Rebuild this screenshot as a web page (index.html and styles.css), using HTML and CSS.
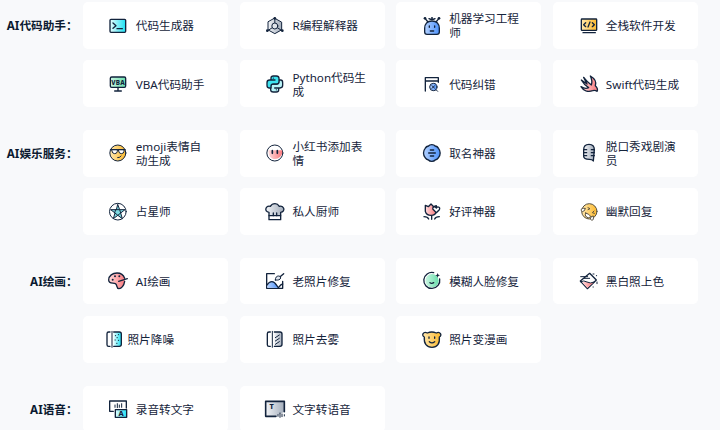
FILE: index.html
```html
<!DOCTYPE html>
<html lang="zh-CN">
<head>
    <meta charset="UTF-8">
    <meta name="viewport" content="width=device-width, initial-scale=1.0">
    <title>AI工具</title>
    <link rel="stylesheet" href="styles.css">
</head>
<body>
    <svg class="defs" width="0" height="0">
        <defs>
            <linearGradient id="cyan"><stop offset="0.1" stop-color="#d3fbfd"/><stop offset="1" stop-color="#1be0f2"/></linearGradient>
            <linearGradient id="green"><stop offset="0" stop-color="#c9f5e1"/><stop offset="1" stop-color="#6bdfad"/></linearGradient>
            <linearGradient id="gray"><stop offset="0" stop-color="#f2f4f7"/><stop offset="1" stop-color="#a3adbb"/></linearGradient>
            <linearGradient id="blue"><stop offset="0" stop-color="#b5d2ff"/><stop offset="1" stop-color="#4c92fc"/></linearGradient>
            <linearGradient id="yellow"><stop offset="0" stop-color="#ffe7ae"/><stop offset="1" stop-color="#fdb92b"/></linearGradient>
            <linearGradient id="red"><stop offset="0" stop-color="#ffdcdd"/><stop offset="1" stop-color="#fb7a7e"/></linearGradient>
        </defs>
    </svg>

    <div class="tools">
        <section class="group">
            <h3 class="label">AI代码助手：</h3>
            <div class="list">
                <a class="card">
                    <svg class="icon" viewBox="0 0 60 60">
                        <rect x="6" y="10" width="47" height="39" rx="3" fill="url(#cyan)"/>
                        <path d="M15 21l9 8-9 8M27 38h16"/>
                    </svg>
                    <span>代码生成器</span>
                </a>
                <a class="card">
                    <svg class="icon thin" viewBox="0 0 60 60">
                        <path fill="url(#gray)" d="M29.500 7L50 18.500v23L29.500 53 9 41.500v-23z"/>
                        <path d="M29.500 7v15M22 35L8 44M37 35l14 9"/>
                        <circle cx="29.500" cy="30" r="9" fill="#dfe4ea"/>
                        <g class="dark"><circle cx="29.500" cy="7" r="4"/><circle cx="7" cy="44" r="4"/><circle cx="52" cy="44" r="4"/></g>
                    </svg>
                    <span>R编程解释器</span>
                </a>
                <a class="card">
                    <svg class="icon" viewBox="0 0 60 60">
                        <path d="M9 7l9 11M51 7l-9 11M21 8q9 5 18 0"/>
                        <path fill="url(#blue)" d="M8 48V37C8 24 16 15 30 15s22 9 22 22v11q0 7-7 7H15q-7 0-7-7z"/>
                        <path d="M22 30v4M38 30v4M25 45h10"/>
                        <g class="dark"><circle cx="9" cy="7" r="4"/><circle cx="51" cy="7" r="4"/><circle cx="30" cy="6" r="3"/></g>
                    </svg>
                    <span>机器学习工程师</span>
                </a>
                <a class="card">
                    <svg class="icon" viewBox="0 0 60 60">
                        <rect x="7" y="9" width="46" height="34" rx="2" fill="url(#yellow)"/>
                        <path d="M20 20l-6 6 6 6M40 20l6 6-6 6M33 18l-6 15M12 50h37"/>
                    </svg>
                    <span>全栈软件开发</span>
                </a>
                <a class="card">
                    <svg class="icon" viewBox="0 0 60 60">
                        <rect x="7" y="9" width="46" height="31" rx="4" fill="url(#green)"/>
                        <path d="M30 40v9M20 51h20"/>
                        <text x="30" y="32" font-size="19" textLength="40">VBA</text>
                    </svg>
                    <span>VBA代码助手</span>
                </a>
                <a class="card">
                    <svg class="icon" viewBox="0 0 60 60">
                        <path fill="#b8f3f7" d="M41 42v6q0 6-7 6h-9q-8 0-8-7V37q0-7 7-7h10q7 0 7-6v-6h6q6 0 6 8v8q0 8-8 8H29"/>
                        <path fill="#3ee3ef" d="M18 18v-6q0-6 7-6h9q8 0 8 7v10q0 7-7 7H25q-7 0-7 6v6h-6q-6 0-6-8v-8q0-8 8-8h16"/>
                        <path class="thin" d="M25 12v1M34 47v1"/>
                    </svg>
                    <span>Python代码生成</span>
                </a>
                <a class="card">
                    <svg class="icon" viewBox="0 0 60 60">
                        <path d="M10 51V11h39v14M10 21h39"/>
                        <circle class="thin" cx="34" cy="39" r="11" fill="url(#blue)"/>
                        <path class="thin" d="M42 47l5 5M30 35l8 8M38 35l-8 8"/>
                    </svg>
                    <span>代码纠错</span>
                </a>
                <a class="card">
                    <svg class="icon" viewBox="0 0 60 60">
                        <path fill="url(#red)" d="M34 6c14 8 18 20 15 29 5 5 8 12 5 17-5-4-8-4-13-2-14 5-28 0-35-12 8 5 17 6 23 3C18 34 12 27 7 18l17 12L14 10c7 9 14 17 23 23 3-9 1-19-3-27z"/>
                    </svg>
                    <span>Swift代码生成</span>
                </a>
            </div>
        </section>

        <section class="group">
            <h3 class="label">AI娱乐服务：</h3>
            <div class="list">
                <a class="card">
                    <svg class="icon thin" viewBox="0 0 60 60">
                        <circle cx="29.500" cy="30" r="24" fill="url(#yellow)"/>
                        <path fill="#fff" d="M12 20h16v5q-1 7-8 7t-8-7zM32 20h16v5q-1 7-8 7t-8-7z"/>
                        <path d="M7 20h45M29 44q7 1 10-5"/>
                    </svg>
                    <span>emoji表情自动生成</span>
                </a>
                <a class="card">
                    <svg class="icon thin" viewBox="0 0 60 60">
                        <circle cx="29.500" cy="30" r="24" fill="#fff"/>
                        <path class="plain" fill="url(#red)" d="M10 22h41q3 12-6 20t-22 5Q10 43 10 22z"/>
                        <path class="mark" d="M22 23v8M37 23v8"/>
                    </svg>
                    <span>小红书添加表情</span>
                </a>
                <a class="card">
                    <svg class="icon" viewBox="0 0 60 60">
                        <path fill="url(#blue)" d="M29.500 5q7 0 10 4 7 1 10 7 5 6 5 14t-5 14q-3 6-10 7-3 4-10 4t-10-4q-7-1-10-7-5-6-5-14t5-14q3-6 10-7 3-4 10-4z"/>
                        <path d="M25 21h10M20 30h20M25 39h10"/>
                    </svg>
                    <span>取名神器</span>
                </a>
                <a class="card">
                    <svg class="icon" viewBox="0 0 60 60">
                        <path fill="url(#gray)" d="M14 40V20C14 9 20 4 30 4s16 6 16 16l-3 34c-3-5-7-5-12-5-11 0-17-3-17-9z"/>
                        <path d="M14 20h9M14 29h9M14 38h9M46 20H37M46 29H37M46 38H37"/>
                    </svg>
                    <span>脱口秀戏剧演员</span>
                </a>
                <a class="card">
                    <svg class="icon thin" viewBox="0 0 60 60">
                        <circle cx="29.500" cy="29" r="25" fill="#fff"/>
                        <path fill="#7fdbe2" d="M29.500 8l5.500 15h16L38 33l5 17-13.500-10L16 50l5-17L8 23h16z"/>
                        <path d="M24 23h11l3 10-8.500 7L21 33z"/>
                    </svg>
                    <span>占星师</span>
                </a>
                <a class="card">
                    <svg class="icon" viewBox="0 0 60 60">
                        <path fill="url(#gray)" d="M12 41V31C4 30 1 25 3 19s8-8 13-6c3-5 8-8 14-8s10 3 13 8c6-2 11 1 13 6s-1 11-9 12v10z"/>
                        <path fill="#fff" d="M12 41h35v12H12z"/>
                        <path d="M25 41v-8M35 41v-8"/>
                    </svg>
                    <span>私人厨师</span>
                </a>
                <a class="card">
                    <svg class="icon" viewBox="0 0 60 60">
                        <path fill="url(#red)" d="M10 10l9 4 8-8 8 8 8-3v17q-2 12-16 12T10 28z"/>
                        <path fill="#fff" d="M43 32L33 22c-3-5 4-11 10-4 5-7 13-1 9 5z"/>
                        <path d="M29 41v11M6 44q11 0 14 7M52 44q-11 0-14 7"/>
                    </svg>
                    <span>好评神器</span>
                </a>
                <a class="card">
                    <svg class="icon thin gold" viewBox="0 0 60 60">
                        <circle cx="31" cy="28" r="23" fill="url(#yellow)"/>
                        <path fill="#fff" d="M20 33q10 2 16 11-9 7-15 0-4-5-1-11z"/>
                        <path fill="#fff" d="M18 19q-12-1-12 6 3 7 9 2zM43 43q2 12-5 12-7-3-2-10z"/>
                        <path d="M27 17l6 3-6 3M45 27l-5 5 6 2"/>
                    </svg>
                    <span>幽默回复</span>
                </a>
            </div>
        </section>

        <section class="group">
            <h3 class="label">AI绘画：</h3>
            <div class="list">
                <a class="card">
                    <svg class="icon" viewBox="0 0 60 60">
                        <path fill="url(#red)" d="M50 31c-2 13-10 22-17 22-9 0-4-12-11-15C15 35 2 39 2 27 2 14 14 6 27 6c13 0 20 7 23 16"/>
                        <path d="M32 31l26-8"/>
                        <g class="dark"><circle cx="14" cy="26" r="3"/><circle cx="21" cy="16" r="3"/><circle cx="34" cy="16" r="3"/></g>
                    </svg>
                    <span>AI绘画</span>
                </a>
                <a class="card">
                    <svg class="icon" viewBox="0 0 60 60">
                        <path d="M28 8H5v44h48V31"/>
                        <path class="plain" fill="url(#blue)" d="M7 43q14-24 29 0l5 7H7z"/>
                        <path d="M5 43q16-22 30 0l6 8M43 47q4-7 10-8"/>
                        <path class="thin" fill="#dfe5ee" d="M31 27q0-12 10-12 7 0 6 6-2 8-16 6z"/>
                        <path d="M47 16l9-8"/>
                    </svg>
                    <span>老照片修复</span>
                </a>
                <a class="card">
                    <svg class="icon" viewBox="0 0 60 60">
                        <circle class="plain" cx="30" cy="29" r="20" fill="url(#green)"/>
                        <path d="M35 5A24 24 0 1 0 53 24M24 35q5 4 11 0"/>
                        <path class="dark" d="M47 6l2 5 5 2-5 2-2 5-2-5-5-2 5-2z"/>
                    </svg>
                    <span>模糊人脸修复</span>
                </a>
                <a class="card">
                    <svg class="icon" viewBox="0 0 60 60">
                        <path fill="#fff" d="M32 7l20 20-27 26L4 30z"/>
                        <path class="plain" fill="url(#red)" d="M9 34q8-4 16 0t18 1L25 51z"/>
                        <path class="thin" d="M5 32q10-5 19 1t22 0M5 17h21M16 22h16M42 9h3M52 14h1M54 33v5M42 48h1"/>
                    </svg>
                    <span>黑白照上色</span>
                </a>
                <a class="card tight">
                    <svg class="icon" viewBox="0 0 60 60">
                        <path d="M18 9h-4q-5 0-5 5v33q0 5 5 5h4"/>
                        <path class="thin" d="M24 7v48"/>
                        <path fill="url(#cyan)" d="M29 9h17q6 0 6 6v31q0 6-6 6H29"/>
                        <path class="thin" d="M34 20h1M43 17h1M39 26h1M33 33h1M43 34h1M38 43h1"/>
                    </svg>
                    <span>照片降噪</span>
                </a>
                <a class="card">
                    <svg class="icon" viewBox="0 0 60 60">
                        <path d="M16 9h-4q-5 0-5 5v33q0 5 5 5h4"/>
                        <path class="thin" d="M22 7v48"/>
                        <path fill="url(#gray)" d="M28 9h17q6 0 6 6v31q0 6-6 6H28"/>
                        <path class="thin" d="M31 26l12-8M31 36l12-8M31 46l12-8"/>
                    </svg>
                    <span>照片去雾</span>
                </a>
                <a class="card">
                    <svg class="icon" viewBox="0 0 60 60">
                        <path fill="url(#yellow)" d="M7 24C-3 19 4 6 16 12q13-6 27 0c11-6 19 7 9 12 2 20-6 31-22 31S5 44 7 24z"/>
                        <path d="M21 24v4M38 24v4M22 38q8 7 16 0"/>
                    </svg>
                    <span>照片变漫画</span>
                </a>
            </div>
        </section>

        <section class="group">
            <h3 class="label">AI语音：</h3>
            <div class="list">
                <a class="card">
                    <svg class="icon" viewBox="0 0 60 60">
                        <path d="M16 37H5V6h50v21"/>
                        <path class="thin" d="M21 18v7M28 14v12M34 18v7M41 14v11"/>
                        <rect x="22" y="32" width="34" height="23" fill="url(#cyan)"/>
                        <text x="39" y="52" font-size="22">A</text>
                    </svg>
                    <span>录音转文字</span>
                </a>
                <a class="card">
                    <svg class="icon bold" viewBox="0 0 60 60">
                        <path fill="url(#gray)" d="M33 52H2V7h56v31"/>
                        <path class="thin" d="M39 47v5M45 42v13M51 45v8M58 47v4"/>
                        <text x="20" y="31" font-size="22">T</text>
                    </svg>
                    <span>文字转语音</span>
                </a>
            </div>
        </section>
    </div>
</body>
</html>
```
FILE: styles.css
```css
body {
    margin: 0;
    background: #f8f9fb;
    color: #15243b;
    font-family: 'Noto Sans', 'Noto Sans CJK SC', sans-serif;
    font-size: 11.65px;
    line-height: 14px;
    height: 430px;
    overflow: hidden;
}

.defs {
    display: block;
}

.tools {
    height: 430px;
    box-sizing: border-box;
    padding-top: 2.3px;
    overflow: hidden;
}

.group {
    display: flex;
    margin-bottom: 23px;
}

.label {
    width: 77.6px;
    margin: 0 5.4px 0 0;
    line-height: 48.6px;
    font-size: 11.65px;
    font-weight: 700;
    text-align: right;
    white-space: nowrap;
    color: #0b1a30;
}

.list {
    display: grid;
    grid-template-columns: repeat(4, 145.1px);
    grid-auto-rows: 46.6px;
    gap: 11.6px;
}

.card {
    display: flex;
    align-items: center;
    gap: 7.3px;
    box-sizing: border-box;
    padding: 0 16px 0 25.5px;
    background: #fff;
    border-radius: 5px;
}

.card span {
    padding-top: 1.5px;
}

.card.tight {
    padding-left: 21.3px;
    gap: 3.2px;
}

.icon {
    flex: none;
    width: 20px;
    height: 20px;
    overflow: visible;
    fill: none;
    stroke: #12233c;
    stroke-width: 4;
    stroke-linecap: round;
    stroke-linejoin: round;
}

.icon.thin,
.icon .thin {
    stroke-width: 3;
}

.icon.bold {
    stroke-width: 4.8;
}

.icon.gold {
    stroke: #57503f;
}

.icon .dark {
    fill: #12233c;
    stroke: none;
}

.icon .plain {
    stroke: none;
}

.icon .mark {
    stroke-width: 5;
}

.icon text {
    fill: #12233c;
    stroke: none;
    font-weight: 800;
    text-anchor: middle;
}
```
